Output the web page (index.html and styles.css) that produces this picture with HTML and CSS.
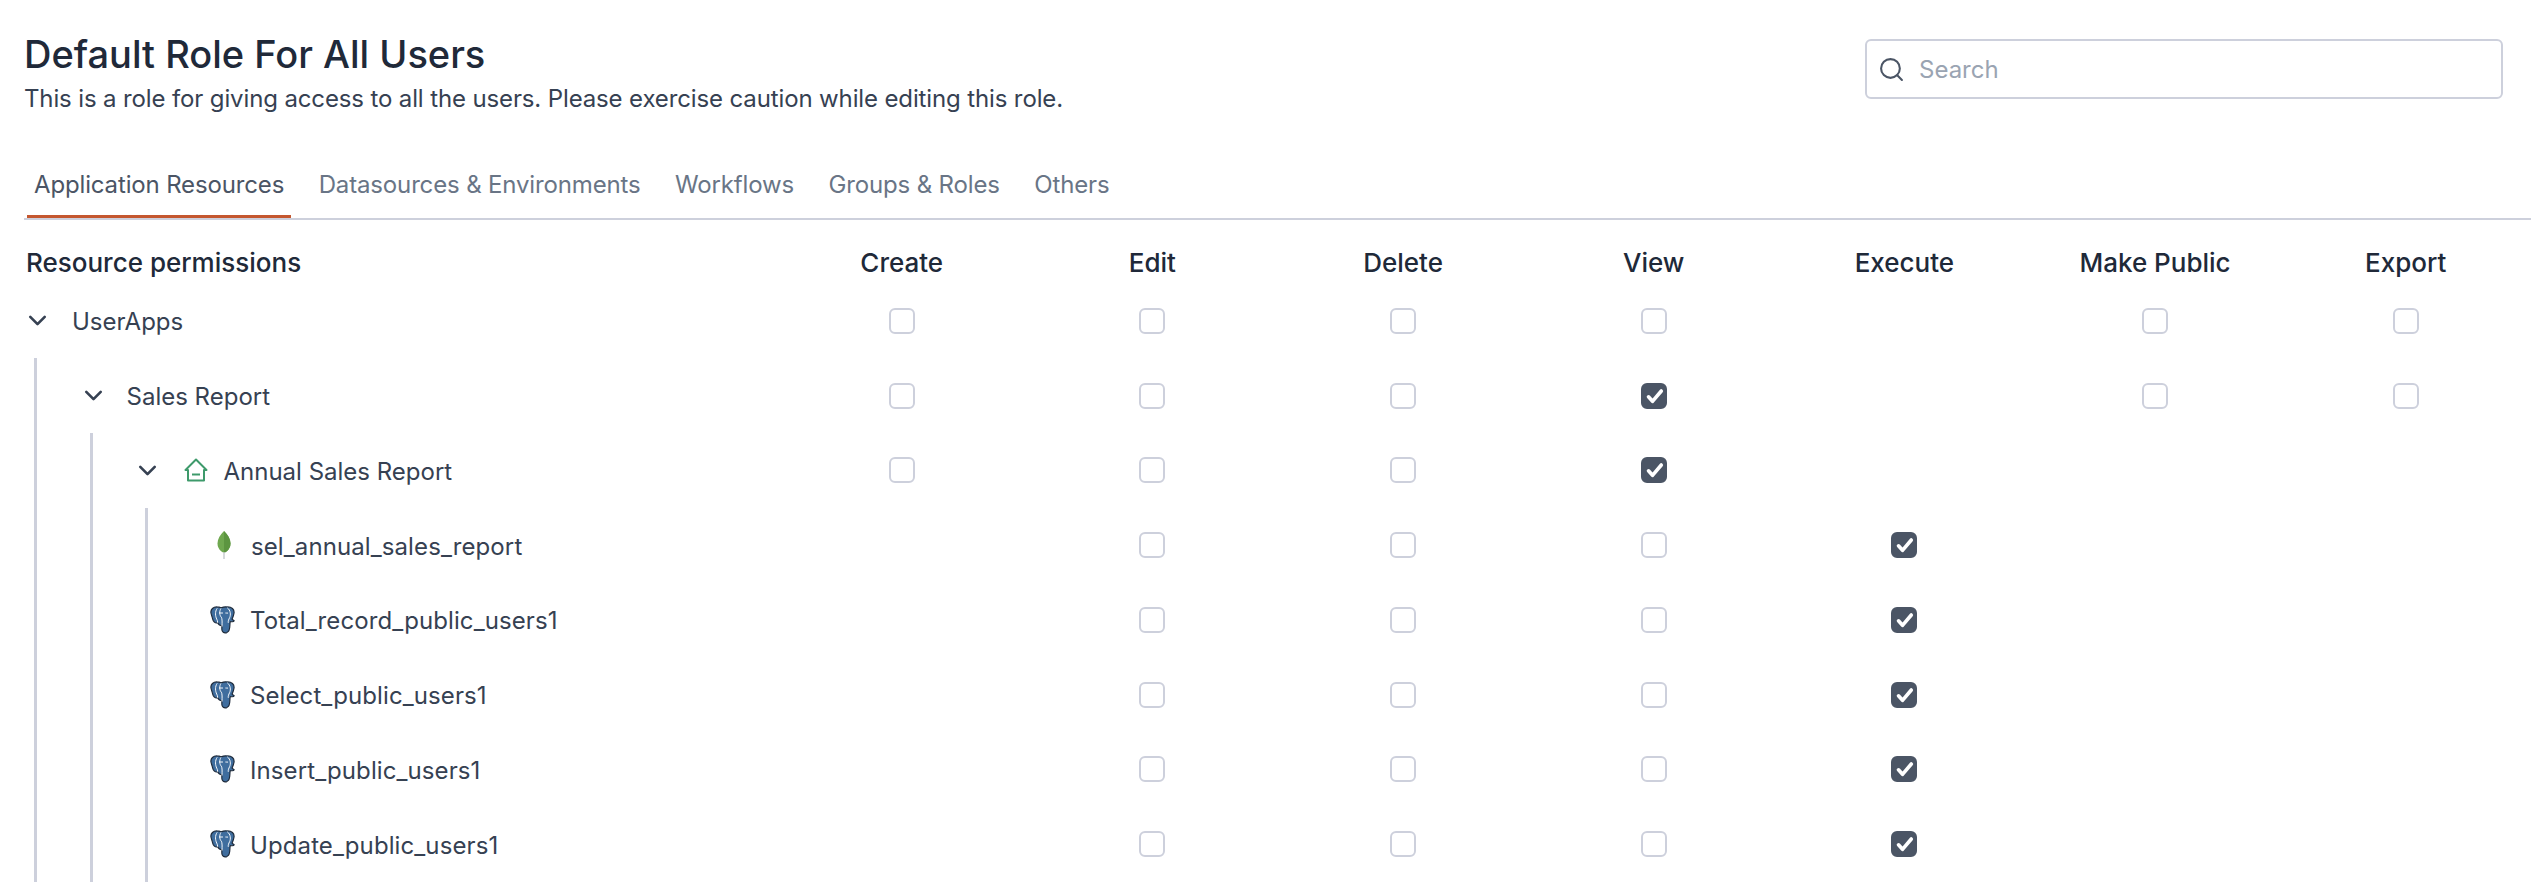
FILE: index.html
```html
<!DOCTYPE html>
<html lang="en">
<head>
<meta charset="utf-8">
<title>Default Role For All Users</title>
<link rel="stylesheet" href="styles.css">
</head>
<body>
<svg class="defs" width="0" height="0" aria-hidden="true">
  <symbol id="chev" viewBox="0 0 16 16"><path d="M2.5 5.2 8 10.8l5.5-5.6" fill="none" stroke="#364152" stroke-width="2" stroke-linecap="round" stroke-linejoin="round"/></symbol>
  <symbol id="tick" viewBox="0 0 26 26"><path d="M7.500 13.800l4 4.500L20.300 8" fill="none" stroke="#fff" stroke-width="3.600" stroke-linecap="round" stroke-linejoin="round"/></symbol>
  <symbol id="pg" viewBox="0 0 26 30" preserveAspectRatio="none">
    <path d="M1 7.500C.4 3.500 3.500.8 7.500 1c1.600 0 2.800.4 4 1C13.500 1.100 15.500.7 18 1c4.500-.1 7.500 2.500 7 6.500-.3 2.500-1.300 4.800-2 6.500.8 1 2 1.400 2.200 1.900-.5 1.100-2.500 1.100-3.800.8-.5 0-.6 1.800-.7 3.500-.1 3 .1 7-3.200 8.300-3 1.100-5.200-.7-5.200-3.600v-3.700C10 21 8.500 19.500 8 18c-2.700 1-4.700-1.500-5.300-4.300C2.300 11.500 1.400 9.800 1 7.500z" fill="#3f6d9e" stroke="#1e2a3a" stroke-width="1.200"/>
    <path d="M7.500 2.500C5 6 5.500 11 7 14c.5 1 1 2.500 1 4M18 2c3.500 2.500 3.800 7.500 2.400 10.500-1 2-1.600 3.500-1.400 5.500M11.500 2.500c-2 3-1.700 7.500.3 9.500 1 1.500.8 6 .7 10M9.500 7.500h4M16 7.500c1 0 2 .2 2.800.1" fill="none" stroke="#fff" stroke-width="1"/>
  </symbol>
</svg>
<main class="page">
  <header class="head">
    <div class="head-text">
      <h1 class="title">Default Role For All Users</h1>
      <p class="subtitle">This is a role for giving access to all the users. Please exercise caution while editing this role.</p>
    </div>
    <label class="search">
      <svg class="search-icon" viewBox="0 0 24 24"><circle cx="11" cy="11" r="9" fill="none" stroke="#4b5565" stroke-width="2"/><path d="M17.500 17.500 22 22" stroke="#4b5565" stroke-width="2" stroke-linecap="round"/></svg>
      <span class="search-text">Search</span>
    </label>
  </header>
  <nav class="tabs">
    <a class="tab active">Application Resources</a>
    <a class="tab">Datasources &amp; Environments</a>
    <a class="tab">Workflows</a>
    <a class="tab">Groups &amp; Roles</a>
    <a class="tab">Others</a>
  </nav>
  <div class="row head-row">
    <div class="name">Resource permissions</div>
    <div class="col">Create</div><div class="col">Edit</div><div class="col">Delete</div><div class="col">View</div><div class="col">Execute</div><div class="col">Make Public</div><div class="col">Export</div>
  </div>
  <div class="row">
    <div class="name"><svg class="chev"><use href="#chev"/></svg><span>UserApps</span></div>
    <div class="col"><i class="cb"></i></div><div class="col"><i class="cb"></i></div><div class="col"><i class="cb"></i></div><div class="col"><i class="cb"></i></div><div class="col"></div><div class="col"><i class="cb"></i></div><div class="col"><i class="cb"></i></div>
  </div>
  <div class="group g1">
    <div class="row">
      <div class="name"><svg class="chev"><use href="#chev"/></svg><span>Sales Report</span></div>
      <div class="col"><i class="cb"></i></div><div class="col"><i class="cb"></i></div><div class="col"><i class="cb"></i></div><div class="col"><i class="cb on"><svg><use href="#tick"/></svg></i></div><div class="col"></div><div class="col"><i class="cb"></i></div><div class="col"><i class="cb"></i></div>
    </div>
    <div class="group g2">
      <div class="row">
        <div class="name"><svg class="chev"><use href="#chev"/></svg>
          <svg class="home" viewBox="0 0 24 24"><path d="M1.500 12 12 1.500 22.500 12H20v10.500H4V12z" fill="none" stroke="#3e9a6b" stroke-width="2" stroke-linejoin="round"/><path d="M8 16.500h8" stroke="#3e9a6b" stroke-width="2"/></svg>
          <span>Annual Sales Report</span></div>
        <div class="col"><i class="cb"></i></div><div class="col"><i class="cb"></i></div><div class="col"><i class="cb"></i></div><div class="col"><i class="cb on"><svg><use href="#tick"/></svg></i></div><div class="col"></div><div class="col"></div><div class="col"></div>
      </div>
      <div class="group g3">
        <div class="row">
          <div class="name"><svg class="mongo" viewBox="0 0 14 28"><path d="M7 0C3 4 .5 8 .500 12.500c0 4.500 3 8 6.500 9.500 3.500-1.500 6.500-5 6.500-9.500C13.500 8 11 4 7 0z" fill="#6fa84f"/><path d="M7 0c4 4 6.500 8 6.500 12.500 0 4.500-3 8-6.500 9.500z" fill="#5c9540"/><path d="M7 21v7" stroke="#c9ccd0" stroke-width="1.500"/></svg><span>sel_annual_sales_report</span></div>
          <div class="col"></div><div class="col"><i class="cb"></i></div><div class="col"><i class="cb"></i></div><div class="col"><i class="cb"></i></div><div class="col"><i class="cb on"><svg><use href="#tick"/></svg></i></div><div class="col"></div><div class="col"></div>
        </div>
        <div class="row">
          <div class="name"><svg class="pg"><use href="#pg"/></svg><span>Total_record_public_users1</span></div>
          <div class="col"></div><div class="col"><i class="cb"></i></div><div class="col"><i class="cb"></i></div><div class="col"><i class="cb"></i></div><div class="col"><i class="cb on"><svg><use href="#tick"/></svg></i></div><div class="col"></div><div class="col"></div>
        </div>
        <div class="row">
          <div class="name"><svg class="pg"><use href="#pg"/></svg><span>Select_public_users1</span></div>
          <div class="col"></div><div class="col"><i class="cb"></i></div><div class="col"><i class="cb"></i></div><div class="col"><i class="cb"></i></div><div class="col"><i class="cb on"><svg><use href="#tick"/></svg></i></div><div class="col"></div><div class="col"></div>
        </div>
        <div class="row">
          <div class="name"><svg class="pg"><use href="#pg"/></svg><span>Insert_public_users1</span></div>
          <div class="col"></div><div class="col"><i class="cb"></i></div><div class="col"><i class="cb"></i></div><div class="col"><i class="cb"></i></div><div class="col"><i class="cb on"><svg><use href="#tick"/></svg></i></div><div class="col"></div><div class="col"></div>
        </div>
        <div class="row">
          <div class="name"><svg class="pg"><use href="#pg"/></svg><span>Update_public_users1</span></div>
          <div class="col"></div><div class="col"><i class="cb"></i></div><div class="col"><i class="cb"></i></div><div class="col"><i class="cb"></i></div><div class="col"><i class="cb on"><svg><use href="#tick"/></svg></i></div><div class="col"></div><div class="col"></div>
        </div>
      </div>
    </div>
  </div>
</main>
</body>
</html>
```
FILE: styles.css
```css
* { box-sizing: border-box; }
html, body { margin: 0; height: 100%; background: #fff; overflow: hidden; }
body { font-family: Inter, "Liberation Sans", sans-serif; color: #364152; }
.defs { position: absolute; }
.page { padding: 0 13px 0 24px; }
.head { display: flex; justify-content: space-between; padding-top: 30px; height: 150px; padding-right: 28px; }
.title { margin: 0; font-size: 38px; font-weight: 500; line-height: 48px; color: #202939; }
.subtitle { margin: 5px 0 0; font-size: 24px; line-height: 32px; letter-spacing: -0.13px; color: #364152; }
.search { display: flex; align-items: center; width: 638px; height: 60px; margin-top: 9px; border: 2px solid #cdd0dc; border-radius: 6px; padding-left: 12px; }
.search-icon { width: 25px; height: 25px; }
.search-text { margin-left: 15px; font-size: 24px; color: #9aa4b2; }
.tabs { display: flex; height: 70px; gap: 20.500px; border-bottom: 2px solid #cdd0dc; padding-left: 3px; }
.tab { height: 68px; padding: 19px 7px 0; font-size: 24px; line-height: 32px; letter-spacing: -0.15px; color: #697586; }
.tab.active { color: #4b5565; border-bottom: 3px solid #c4572f; }
.row { display: flex; align-items: center; height: 74.750px; }
.head-row { height: 63.600px; padding-top: 22px; color: #202939; font-size: 26px; font-weight: 500; }
.name { flex: 1; min-width: 0; display: flex; align-items: center; font-size: 24px; padding-left: 2px; }
.name span { padding-top: 2px; }
.col { flex: 0 0 250.670px; display: flex; justify-content: center; align-items: center; }
.head-row .name { font-size: 26px; }
.cb { display: block; width: 26px; height: 26px; border: 2px solid #cdd0dc; border-radius: 6px; }
.cb.on { background: #4b5565; border-color: #4b5565; }
.cb.on svg { display: block; width: 26px; height: 26px; margin: -2px; }
.chev { width: 21px; height: 21px; margin: 0 24px 0 1px; flex: none; }
.g1 > .row .chev { margin-right: 22.500px; }
.group { border-left: 3px solid #cdd0dc; }
.g1 { margin-left: 10px; padding-left: 43px; }
.g2 { margin-left: 10px; padding-left: 40.500px; }
.g3 { margin-left: 11px; padding-left: 64px; }
.g3 .name { letter-spacing: 0.1px; }
.home { width: 24px; height: 24px; margin: 0 16px 0 2px; flex: none; }
.mongo { width: 14px; height: 28px; margin: 0 20px 0 3.500px; flex: none; }
.pg { width: 25px; height: 28px; margin: 0 15px 0 -3.500px; flex: none; }
```
